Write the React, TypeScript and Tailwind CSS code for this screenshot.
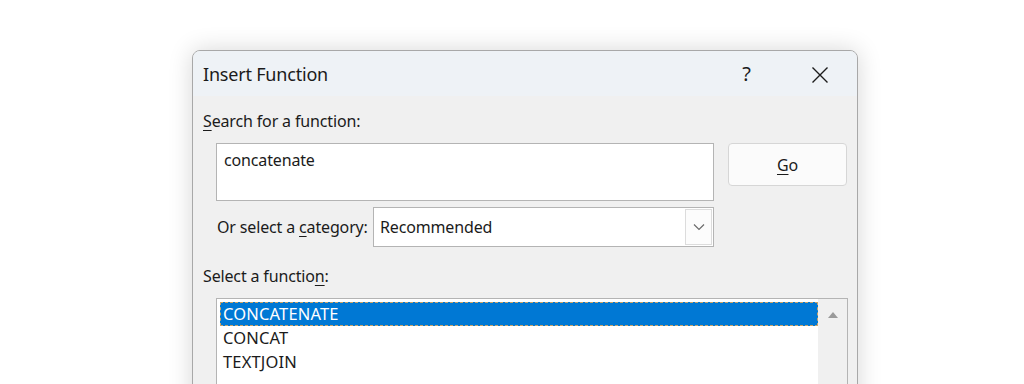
import React from "react";

const font = { fontFamily: '"Noto Sans", "Open Sans", sans-serif' };

function Key({ children }: { children: React.ReactNode }) {
  return <span className="underline underline-offset-[3px] decoration-1">{children}</span>;
}

export default function App() {
  const items = ["CONCATENATE", "CONCAT", "TEXTJOIN"];
  return (
    <div className="w-[1024px] h-[384px] overflow-hidden bg-white" style={font}>
      <div className="ml-[192px] mt-[50px] w-[666px] h-[400px] rounded-t-[8px] border border-[#a8a8a8] bg-[#f0f0f0] shadow-[0_0_24px_rgba(0,0,0,0.16)] overflow-hidden text-[#1b1b1b]">
        {/* title bar */}
        <div className="h-[45px] bg-[#eef2f6] flex items-center pl-[10px] pr-[28px]">
          <span className="text-[18px] tracking-[-0.2px] flex-1 pt-[1px]">Insert Function</span>
          <span className="text-[20px] mr-[60px]">?</span>
          <svg width="18" height="18" viewBox="0 0 18 18" className="mt-[2px]">
            <path d="M1.5 1.5 L16.5 16.5 M16.5 1.5 L1.5 16.5" stroke="#1b1b1b" strokeWidth="1.4" fill="none" />
          </svg>
        </div>

        <div className="pl-[10px] text-[16px] tracking-[-0.15px]">
          <div className="h-[24px] mt-[13px] flex items-center">
            <span><Key>S</Key>earch for a function:</span>
          </div>

          <div className="flex mt-[10px] ml-[13px]">
            <div className="w-[498px] h-[58px] bg-white border border-[#b4b4b4] px-[7px] pt-[4px]">
              concatenate
            </div>
            <div className="ml-[14px] w-[119px] h-[43px] rounded-[4px] bg-[#fbfbfb] border border-[#d6d6d6] flex items-center justify-center">
              <span><Key>G</Key>o</span>
            </div>
          </div>

          <div className="flex items-center mt-[6px] ml-[14px]">
            <span className="w-[156px]">Or select a <Key>c</Key>ategory:</span>
            <div className="w-[341px] h-[40px] bg-white border border-[#b4b4b4] flex items-center pl-[6px] pr-[1px]">
              <span className="flex-1">Recommended</span>
              <div className="w-[27px] h-[36px] bg-[#fcfcfc] border border-[#dcdcdc] flex items-center justify-center">
                <svg width="12" height="8" viewBox="0 0 12 8">
                  <path d="M1 1.5 L6 6.5 L11 1.5" stroke="#6b6b6b" strokeWidth="1.2" fill="none" />
                </svg>
              </div>
            </div>
          </div>

          <div className="h-[24px] mt-[17px] flex items-center">
            <span>Select a functio<Key>n</Key>:</span>
          </div>

          <div className="mt-[10px] ml-[13px] w-[632px] h-[120px] bg-white border border-[#b4b4b4] flex">
            <div className="flex-1 pl-[3px] pt-[3px] text-[16.5px] tracking-[0.15px]">
              {items.map((it, i) => (
                <div
                  key={it}
                  className={
                    i === 0
                      ? "h-[24px] flex items-center pl-[3px] bg-[#0078d4] text-white outline-1 outline-dashed outline-[#c9a46a] -outline-offset-1"
                      : "h-[24px] flex items-center pl-[3px]"
                  }
                >
                  {it}
                </div>
              ))}
            </div>
            <div className="w-[29px] bg-[#f0f0f0] flex justify-center pt-[12px]">
              <svg width="12" height="8" viewBox="0 0 12 8">
                <path d="M6 1 L11 7 L1 7 Z" fill="#9a9a9a" />
              </svg>
            </div>
          </div>
        </div>
      </div>
    </div>
  );
}
